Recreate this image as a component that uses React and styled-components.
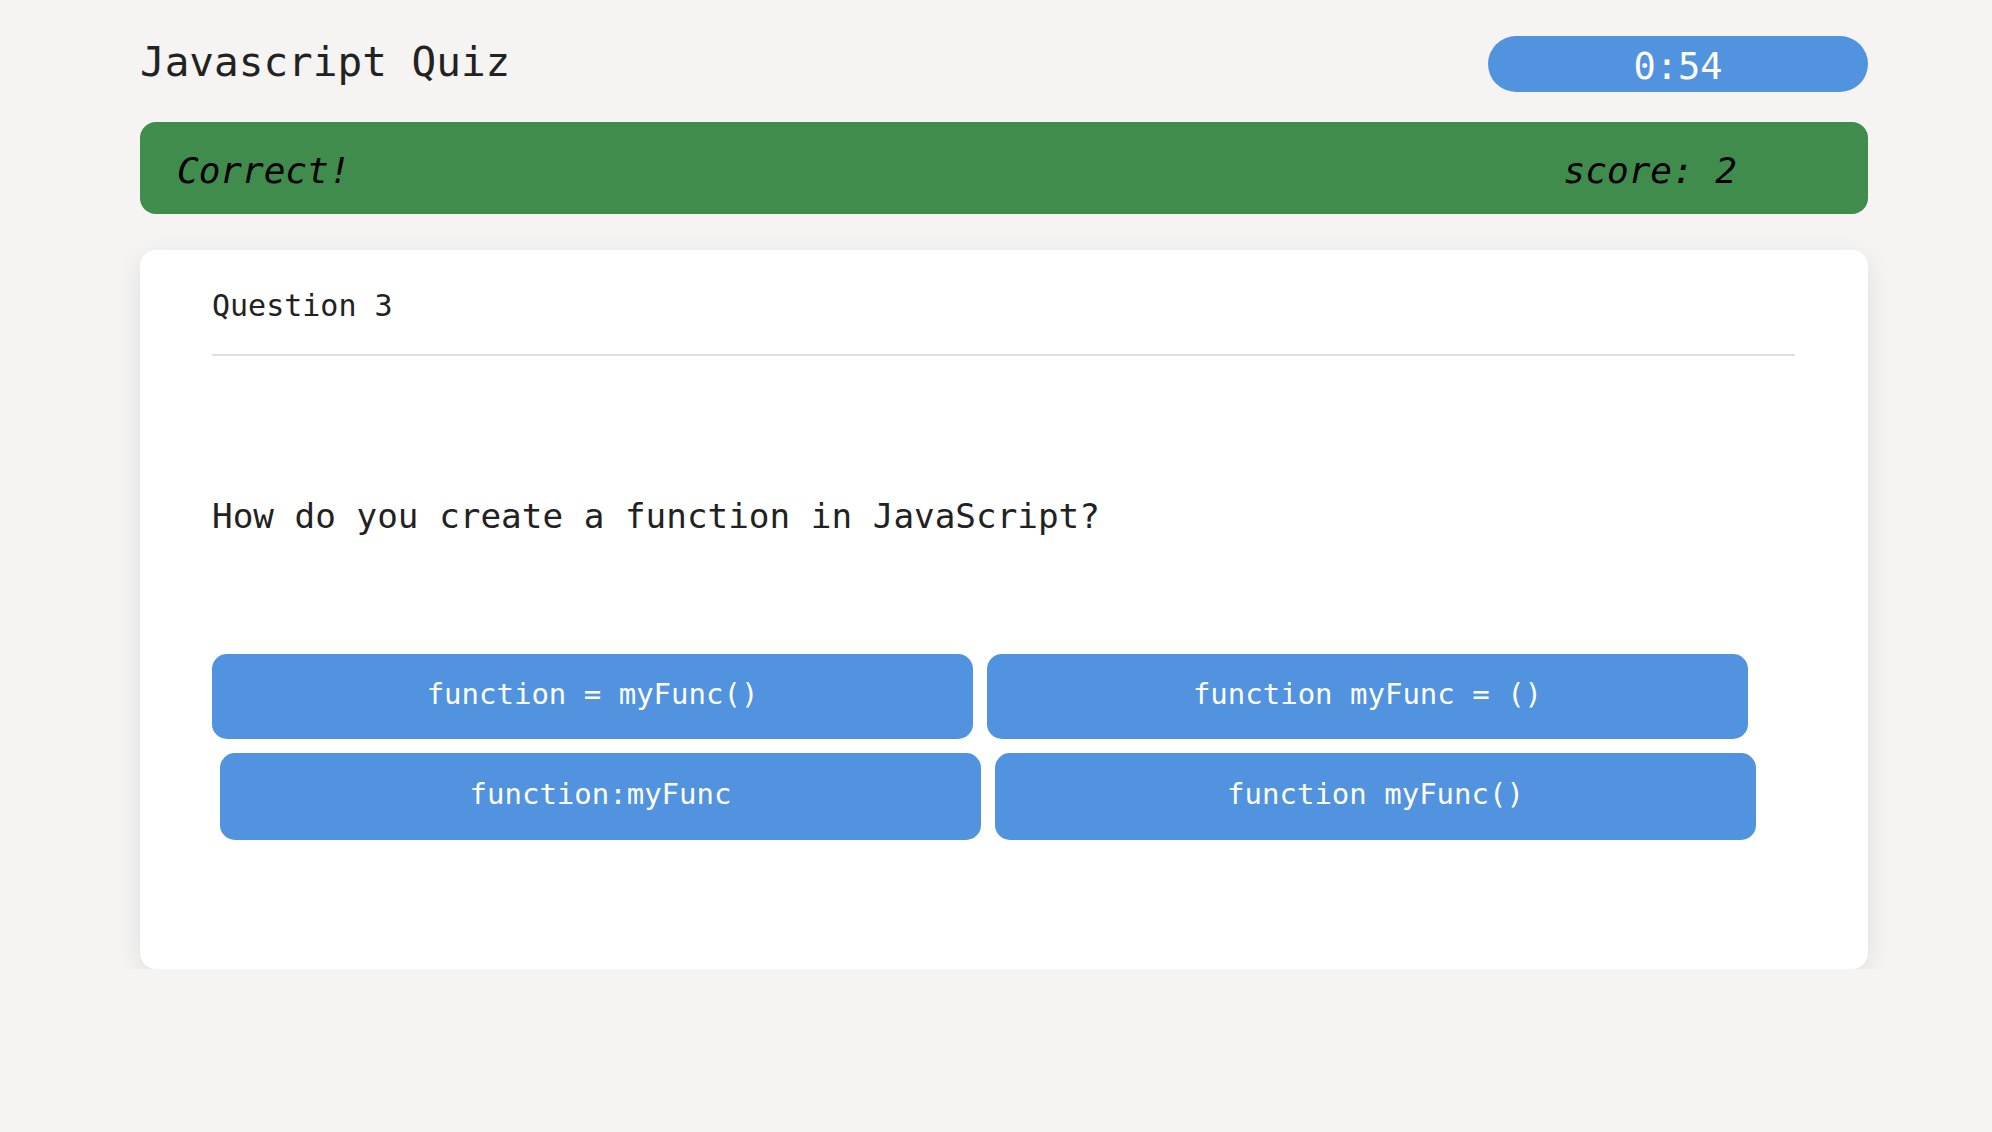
import styled, { createGlobalStyle } from "styled-components";

const GlobalStyle = createGlobalStyle`
    body {
        margin: 0;
        background: #f5f4f2;
        font-family: "DejaVu Sans Mono", "Liberation Mono", monospace;
        color: #222;
    }
`;

const Page = styled.div`
    width: 1728px;
    padding: 36px 0 0 140px;
`;

const Header = styled.header`
    display: flex;
    align-items: center;
    justify-content: space-between;
    height: 56px;
    margin-bottom: 30px;
`;

const Title = styled.h1`
    font-size: 41px;
    font-weight: 400;
    margin: 0 0 4px;
    color: #222;
`;

const Timer = styled.div`
    width: 380px;
    height: 56px;
    padding-top: 4px;
    box-sizing: border-box;
    border-radius: 28px;
    background: #5193df;
    color: #fff;
    font-size: 37px;
    display: flex;
    align-items: center;
    justify-content: center;
`;

const Banner = styled.div`
    display: flex;
    align-items: center;
    justify-content: space-between;
    height: 92px;
    box-sizing: border-box;
    padding: 4px 131px 0 37px;
    border-radius: 16px;
    background: #3f8c4c;
    color: #000;
    font-size: 36px;
    font-style: italic;
    margin-bottom: 36px;
`;

const Card = styled.section`
    background: #fff;
    border-radius: 16px;
    box-shadow: 0 8px 26px rgba(0, 0, 0, 0.09);
    padding: 38px 73px 129px 72px;
    height: 719px;
    box-sizing: border-box;
`;

const QuestionNumber = styled.div`
    font-size: 30px;
    line-height: 36px;
    padding-bottom: 30px;
    border-bottom: 2px solid #dedede;
`;

const QuestionText = styled.p`
    font-size: 34.3px;
    line-height: 40px;
    margin: 140px 0 118px;
`;

const Answers = styled.div`
    display: flex;
    flex-direction: column;
    gap: 14px;
`;

const AnswerRow = styled.div`
    display: flex;
    gap: 14px;
    padding-left: ${props => props.$offset || 0}px;
`;

const AnswerButton = styled.button`
    width: 761px;
    height: ${props => props.$tall ? 87 : 85}px;
    border: none;
    border-radius: 15px;
    background: #5193df;
    color: #fff;
    font-family: inherit;
    font-size: 29px;
    padding-bottom: 6px;
    cursor: pointer;
`;

const rows = [
    ["function = myFunc()", "function myFunc = ()"],
    ["function:myFunc", "function myFunc()"],
];

const App = () => {
    return (
        <>
            <GlobalStyle />
            <Page>
                <Header>
                    <Title>Javascript Quiz</Title>
                    <Timer>0:54</Timer>
                </Header>
                <Banner>
                    <span>Correct!</span>
                    <span>score: 2</span>
                </Banner>
                <Card>
                    <QuestionNumber>Question 3</QuestionNumber>
                    <QuestionText>How do you create a function in JavaScript?</QuestionText>
                    <Answers>
                        {rows.map((row, i) => (
                            <AnswerRow key={i} $offset={i * 8}>
                                {row.map((answer) => (
                                    <AnswerButton key={answer} $tall={i === 1}>{answer}</AnswerButton>
                                ))}
                            </AnswerRow>
                        ))}
                    </Answers>
                </Card>
            </Page>
        </>
    );
};

export default App;
